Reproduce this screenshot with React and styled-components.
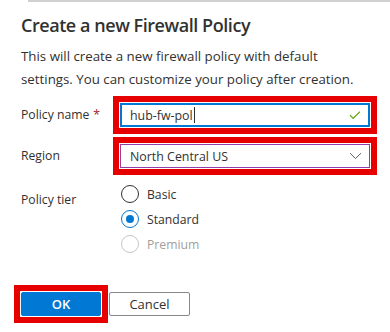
import React, { useState } from 'react';
import styled, { createGlobalStyle } from 'styled-components';

const GlobalStyle = createGlobalStyle`
  html, body {
    margin: 0;
    padding: 0;
    background: #fff;
  }
  body {
    font-family: "Open Sans", "Noto Sans", sans-serif;
    color: #323130;
  }
`;

const Panel = styled.div`
  position: relative;
  width: 390px;
  height: 332px;
  box-sizing: border-box;
  padding: 11px 20px 0 21px;
  background: #fff;

  &::before {
    content: '';
    position: absolute;
    top: 0;
    left: 28px;
    right: 0;
    height: 2px;
    background: #d2d0ce;
  }
`;

const Title = styled.h2`
  margin: 0;
  font-size: 18px;
  line-height: 28px;
  font-weight: 600;
  color: #323130;
  letter-spacing: -0.45px;
`;

const Description = styled.p`
  margin: 6px 0 0;
  width: 349px;
  font-size: 13.3px;
  line-height: 23px;
  color: #323130;
`;

const Form = styled.div`
  display: grid;
  grid-template-columns: 99px 250px;
  row-gap: 17px;
  margin-top: 12px;
`;

const Label = styled.div`
  display: flex;
  align-items: ${(p) => (p.$top ? 'flex-start' : 'center')};
  padding-top: ${(p) => (p.$top ? '5px' : '0')};
  font-size: 12.2px;
  line-height: 20px;
  color: #323130;
`;

const Required = styled.span`
  color: #a4262c;
  margin-left: 4px;
`;

const Highlight = styled.div`
  border: 6px solid #e60000;
  padding: 1px;
  margin: -7px;
  background: #fff;
`;

const Field = styled.div`
  display: flex;
  align-items: center;
  height: 24px;
  box-sizing: border-box;
  padding: 0 7px 0 9px;
  border: ${(p) => (p.$focused ? '2px solid #0078d4' : '1px solid #8f3fa8')};
  padding-left: ${(p) => (p.$focused ? '8px' : '9px')};
  background: #fff;
  font-size: 12.4px;
  color: #323130;
`;

const FieldText = styled.span`
  flex: 1;
  display: flex;
  align-items: center;
`;

const Caret = styled.span`
  display: inline-block;
  width: 1px;
  height: 16px;
  background: #323130;
  margin-left: 1px;
`;

const RadioGroup = styled.div`
  display: flex;
  flex-direction: column;
  gap: 7px;
`;

const RadioItem = styled.label`
  display: flex;
  align-items: center;
  height: 18px;
  gap: 8px;
  margin-left: 1px;
  font-size: 12.2px;
  color: ${(p) => (p.$disabled ? '#a19f9d' : '#323130')};
`;

const Circle = styled.span`
  width: 18px;
  height: 18px;
  box-sizing: border-box;
  border-radius: 50%;
  border: 1px solid
    ${(p) => (p.$disabled ? '#c8c6c4' : p.$checked ? '#0078d4' : '#323130')};
  display: flex;
  align-items: center;
  justify-content: center;

  &::after {
    content: '';
    width: 8px;
    height: 8px;
    border-radius: 50%;
    background: ${(p) => (p.$checked ? '#0078d4' : 'transparent')};
  }
`;

const Footer = styled.div`
  display: flex;
  gap: 8px;
  margin-top: 39px;
`;

const Button = styled.button`
  width: ${(p) => (p.$primary ? '80px' : '81px')};
  height: 24px;
  box-sizing: border-box;
  border-radius: 2px;
  border: 1px solid ${(p) => (p.$primary ? '#0078d4' : '#8a8886')};
  background: ${(p) => (p.$primary ? '#0078d4' : '#fff')};
  color: ${(p) => (p.$primary ? '#fff' : '#323130')};
  font-family: inherit;
  font-size: 13px;
  font-weight: ${(p) => (p.$primary ? 600 : 400)};
  padding: 0;
  cursor: pointer;
`;

const Check = () => (
  <svg width="12" height="10" viewBox="0 0 12 10">
    <path d="M1 5.2 L4.2 8.4 L11 1.6" fill="none" stroke="#57a300" strokeWidth="1.2" />
  </svg>
);

const Chevron = () => (
  <svg width="13" height="8" viewBox="0 0 13 8">
    <path d="M1 1.2 L6.5 6.5 L12 1.2" fill="none" stroke="#605e5c" strokeWidth="1" />
  </svg>
);

const tiers = ['Basic', 'Standard', 'Premium'];

export default function App() {
  const [tier, setTier] = useState('Standard');

  return (
    <Panel>
      <GlobalStyle />
      <Title>Create a new Firewall Policy</Title>
      <Description>
        This will create a new firewall policy with default settings. You can
        customize your policy after creation.
      </Description>

      <Form>
        <Label>
          Policy name<Required>*</Required>
        </Label>
        <Highlight>
          <Field $focused>
            <FieldText>
              hub-fw-pol<Caret />
            </FieldText>
            <Check />
          </Field>
        </Highlight>

        <Label>Region</Label>
        <Highlight>
          <Field>
            <FieldText>North Central US</FieldText>
            <Chevron />
          </Field>
        </Highlight>

        <Label $top>Policy tier</Label>
        <RadioGroup>
          {tiers.map((t) => {
            const disabled = t === 'Premium';
            return (
              <RadioItem
                key={t}
                $disabled={disabled}
                onClick={() => !disabled && setTier(t)}
              >
                <Circle $checked={tier === t} $disabled={disabled} />
                {t}
              </RadioItem>
            );
          })}
        </RadioGroup>
      </Form>

      <Footer>
        <Highlight>
          <Button $primary>OK</Button>
        </Highlight>
        <Button>Cancel</Button>
      </Footer>
    </Panel>
  );
}
